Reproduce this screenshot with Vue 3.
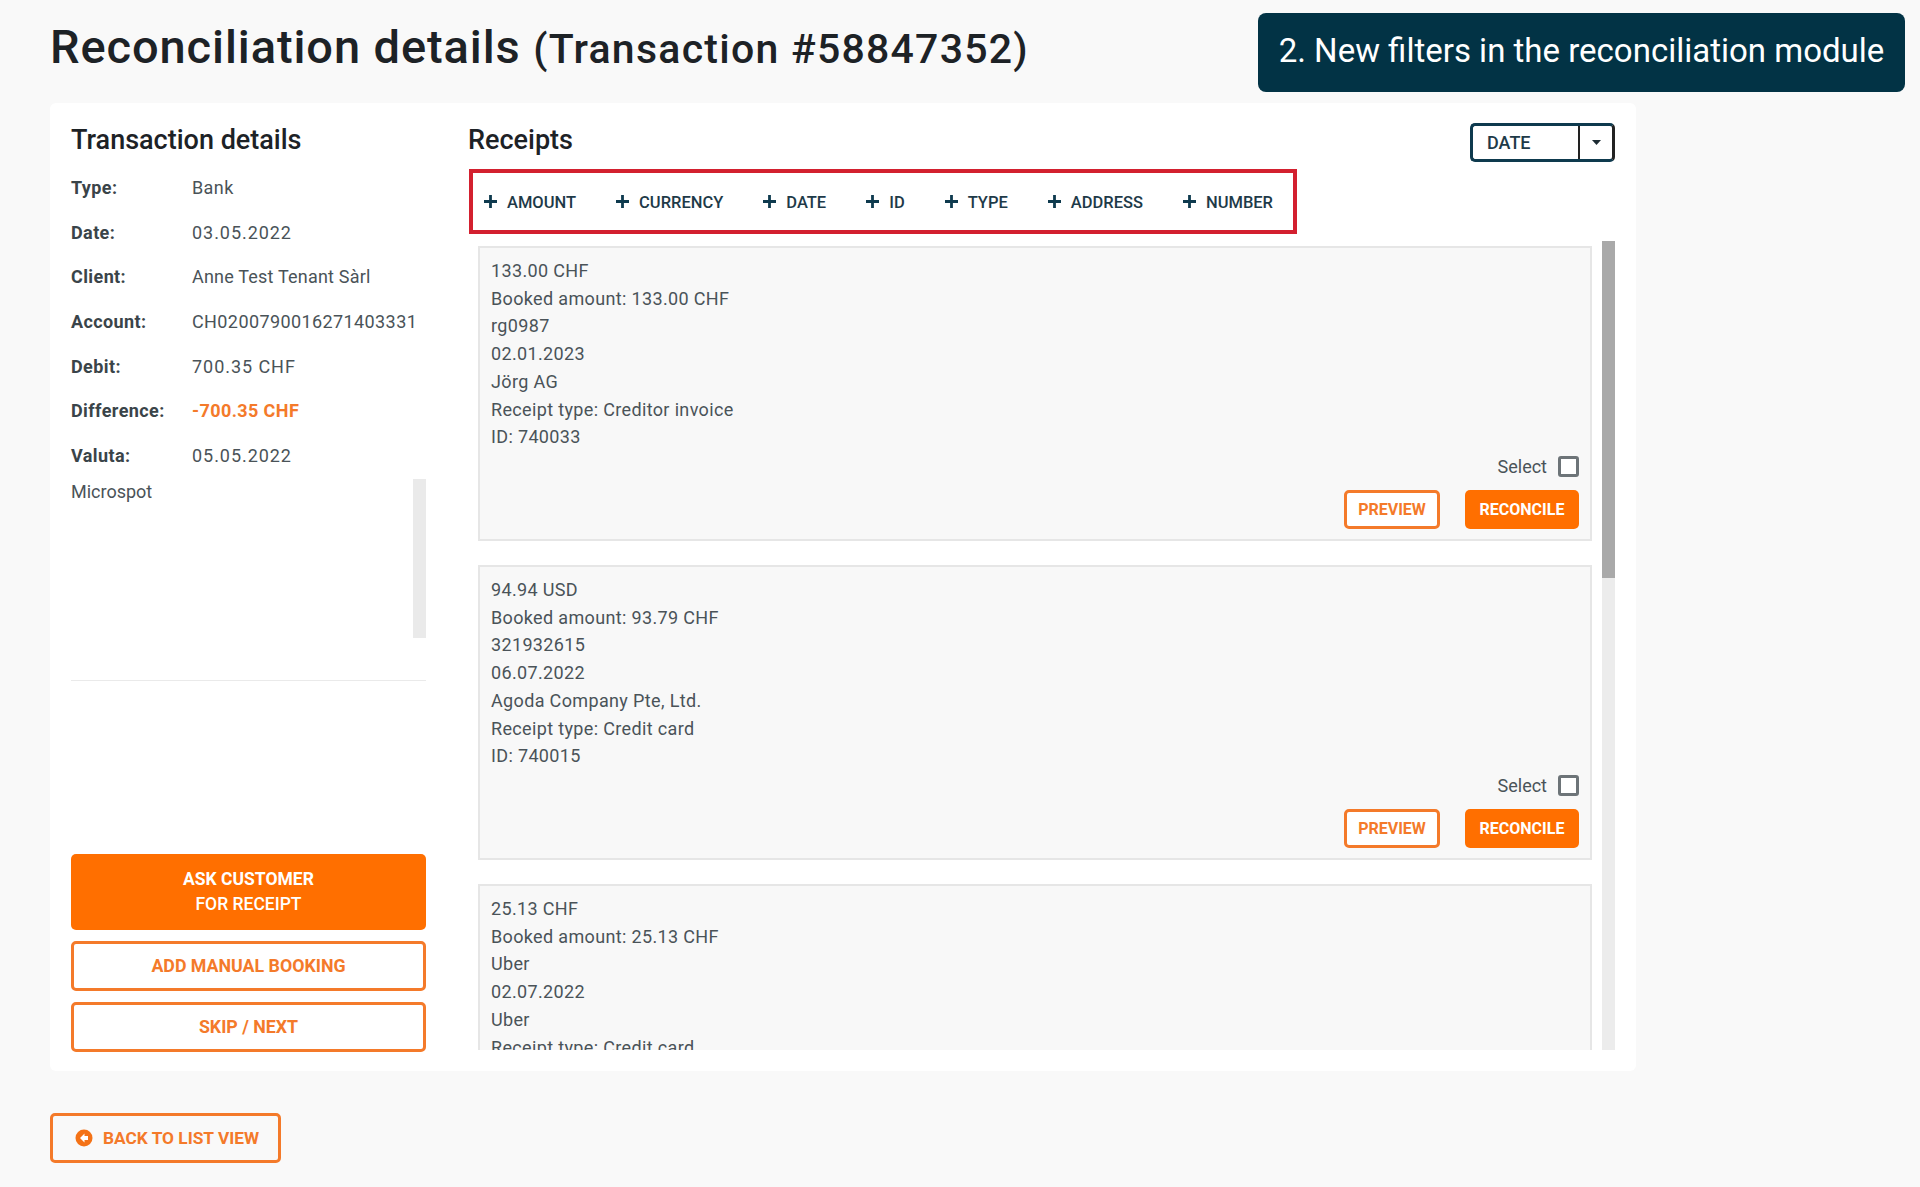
<script setup>
const details = [
  { label: 'Type:', value: 'Bank' },
  { label: 'Date:', value: '03.05.2022', num: true },
  { label: 'Client:', value: 'Anne Test Tenant Sàrl', tight: true },
  { label: 'Account:', value: 'CH0200790016271403331' },
  { label: 'Debit:', value: '700.35 CHF', num: true },
  { label: 'Difference:', value: '-700.35 CHF', alert: true },
  { label: 'Valuta:', value: '05.05.2022', num: true }
]
const filters = ['AMOUNT', 'CURRENCY', 'DATE', 'ID', 'TYPE', 'ADDRESS', 'NUMBER']
const receipts = [
  ['133.00 CHF', 'Booked amount: 133.00 CHF', 'rg0987', '02.01.2023', 'Jörg AG', 'Receipt type: Creditor invoice', 'ID: 740033'],
  ['94.94 USD', 'Booked amount: 93.79 CHF', '321932615', '06.07.2022', 'Agoda Company Pte, Ltd.', 'Receipt type: Credit card', 'ID: 740015'],
  ['25.13 CHF', 'Booked amount: 25.13 CHF', 'Uber', '02.07.2022', 'Uber', 'Receipt type: Credit card']
]
</script>

<template>
  <div class="page">
    <header class="top">
      <h1 class="title">Reconciliation details <small>(Transaction #58847352)</small></h1>
    </header>
    <div class="banner">2. New filters in the reconciliation module</div>

    <main class="panel">
      <aside class="left">
        <h2 class="heading">Transaction details</h2>
        <dl class="facts">
          <div v-for="d in details" :key="d.label" class="fact">
            <dt>{{ d.label }}</dt>
            <dd :class="{ alert: d.alert, num: d.num, tight: d.tight }">{{ d.value }}</dd>
          </div>
        </dl>
        <div class="note">
          <span>Microspot</span>
          <i class="note-bar"></i>
        </div>
        <div class="rule"></div>
        <div class="actions">
          <button class="btn solid ask"><b>ASK CUSTOMER</b><span>FOR RECEIPT</span></button>
          <button class="btn outline wide">ADD MANUAL BOOKING</button>
          <button class="btn outline wide">SKIP / NEXT</button>
        </div>
      </aside>

      <section class="right">
        <div class="right-head">
          <h2 class="heading">Receipts</h2>
          <div class="select">
            <span class="select-value">DATE</span>
            <span class="select-caret"><svg width="9" height="5" viewBox="0 0 9 5"><path d="M0 0h9L4.500 5z" fill="#1c2b33" /></svg></span>
          </div>
        </div>
        <div class="filters">
          <span v-for="f in filters" :key="f" class="filter">
            <svg width="15" height="15" viewBox="0 0 15 15"><path d="M7.500 1v13M1 7.500h13" stroke="#0e3a4e" stroke-width="2.800" fill="none" /></svg>
            <span class="filter-text">{{ f }}</span>
          </span>
        </div>
        <div class="list-wrap">
          <div class="list">
            <article v-for="r in receipts" :key="r[0]" class="card">
              <div v-for="(line, i) in r" :key="i" class="line">{{ line }}</div>
              <div class="pick">Select <i class="check"></i></div>
              <div class="card-btns">
                <button class="btn outline small">PREVIEW</button>
                <button class="btn solid small rec">RECONCILE</button>
              </div>
            </article>
          </div>
          <div class="track"><div class="thumb"></div></div>
        </div>
      </section>
    </main>

    <button class="btn outline back">
      <svg width="18" height="18" viewBox="0 0 18 18"><circle cx="9" cy="9" r="8.500" fill="#f47216" /><path d="M9.500 4.500 5 9l4.500 4.500V11H13V7H9.500z" fill="#fff" /></svg>
      BACK TO LIST VIEW
    </button>
  </div>
</template>

<style scoped>
.page {
  position: relative;
  height: 1187px;
  box-sizing: border-box;
  padding: 0 50px;
  background: #f9f9f9;
  font-family: Roboto, "Liberation Sans", sans-serif;
  color: #3f4a50;
  overflow: hidden;
}
.top {
  height: 103px;
  display: flex;
  align-items: center;
  padding-bottom: 10px;
  box-sizing: border-box;
}
.title {
  margin: 0;
  font-size: 47px;
  font-weight: 500;
  line-height: 1;
  letter-spacing: 0.9px;
  color: #1d2226;
  white-space: nowrap;
}
.title small {
  font-size: 41px;
  font-weight: 500;
  letter-spacing: 1.250px;
}
.banner {
  position: absolute;
  left: 1258px;
  top: 13px;
  width: 647px;
  height: 79px;
  box-sizing: border-box;
  display: flex;
  align-items: center;
  justify-content: center;
  padding-bottom: 4px;
  background: #023345;
  border-radius: 8px;
  color: #fff;
  font-size: 33px;
  font-weight: 400;
  white-space: nowrap;
}
.panel {
  width: 1586px;
  height: 968px;
  box-sizing: border-box;
  display: flex;
  gap: 42px;
  padding: 0 21px 0 21px;
  background: #fff;
  border-radius: 6px;
}
.left {
  width: 355px;
  flex: none;
  display: flex;
  flex-direction: column;
}
.heading {
  margin: 0;
  font-size: 27px;
  font-weight: 500;
  color: #1d2226;
  line-height: 32px;
}
.left > .heading {
  margin-top: 21px;
}
.facts {
  margin: 9px 0 0;
}
.fact {
  display: flex;
  height: 44.700px;
  align-items: center;
  font-size: 18px;
}
.fact dt {
  width: 121px;
  font-weight: 700;
  letter-spacing: 0.4px;
  color: #3a4449;
}
.fact dd {
  margin: 0;
  letter-spacing: 0.4px;
  color: #4a5358;
  white-space: nowrap;
}
.fact dd.num {
  letter-spacing: 0.95px;
}
.fact dd.tight {
  letter-spacing: 0.2px;
}
.fact dd.alert {
  color: #f47a2a;
  font-weight: 700;
}
.note {
  height: 159px;
  margin-top: 1px;
  display: flex;
  justify-content: space-between;
  font-size: 18px;
  color: #4a5358;
}
.note span {
  padding-top: 2px;
}
.note-bar {
  width: 13px;
  background: #eaeaea;
}
.rule {
  margin-top: 42px;
  height: 1px;
  background: #eaeaea;
}
.actions {
  margin-top: 173px;
  display: flex;
  flex-direction: column;
  gap: 11px;
}
.btn {
  box-sizing: border-box;
  font-family: inherit;
  font-weight: 700;
  border-radius: 5px;
  cursor: pointer;
}
.solid {
  background: #ff6f00;
  border: 0;
  color: #fff;
}
.outline {
  background: #fff;
  border: 3px solid #f47a2a;
  color: #f47a2a;
}
.ask {
  height: 76px;
  font-size: 17.500px;
  display: flex;
  flex-direction: column;
  align-items: center;
  justify-content: center;
  line-height: 25px;
}
.ask b {
  font-weight: 700;
}
.ask span {
  font-weight: 500;
}
.wide {
  height: 50px;
  font-size: 17.800px;
}
.right {
  flex: 1;
  min-width: 0;
  display: flex;
  flex-direction: column;
}
.right-head {
  display: flex;
  justify-content: space-between;
  align-items: flex-start;
  height: 66px;
  padding-top: 20px;
  box-sizing: border-box;
}
.right-head .heading {
  margin-top: 1px;
}
.select {
  display: flex;
  width: 145px;
  height: 39px;
  border: 3px solid #0e3a4e;
  border-right-color: #222;
  border-radius: 5px;
  box-sizing: border-box;
}
.select-value {
  flex: 1;
  display: flex;
  align-items: center;
  padding-left: 14px;
  font-size: 18px;
  font-weight: 500;
  color: #1e3a48;
}
.select-caret {
  width: 32px;
  border-left: 2px solid #222;
  display: flex;
  align-items: center;
  justify-content: center;
}
.filters {
  box-sizing: border-box;
  width: 828px;
  height: 65px;
  margin-left: 1px;
  border: 4px solid #d3202f;
  display: flex;
  align-items: center;
  gap: 39px;
  padding-left: 10px;
}
.filter {
  display: flex;
  align-items: center;
  gap: 9px;
  font-size: 16.500px;
  font-weight: 500;
  color: #1e3a48;
  white-space: nowrap;
}
.filter-text {
  padding-top: 2px;
}
.list-wrap {
  display: flex;
  height: 809px;
  margin-top: 7px;
  overflow: hidden;
  padding-left: 10px;
  gap: 10px;
}
.list {
  width: 1114px;
  flex: none;
  padding-top: 5px;
  display: flex;
  flex-direction: column;
  gap: 24px;
}
.card {
  box-sizing: border-box;
  height: 295px;
  flex: none;
  border: 2px solid #e6e6e6;
  background: #f8f8f8;
  padding: 9px 11px 10px;
  font-size: 18px;
  letter-spacing: 0.350px;
  color: #4a5358;
}
.line {
  line-height: 27.700px;
}
.pick {
  display: flex;
  justify-content: flex-end;
  align-items: center;
  gap: 11px;
  margin-top: 5px;
  font-size: 18px;
  letter-spacing: 0;
}
.check {
  width: 21px;
  height: 21px;
  box-sizing: border-box;
  border: 3px solid #6d7478;
  border-radius: 3px;
  background: #fff;
}
.card-btns {
  display: flex;
  justify-content: flex-end;
  gap: 25px;
  margin-top: 13px;
  letter-spacing: 0;
}
.small {
  height: 39px;
  font-size: 16px;
}
.card-btns .outline {
  width: 96px;
}
.rec {
  width: 114px;
}
.track {
  width: 13px;
  flex: none;
  background: #ececec;
}
.thumb {
  height: 337px;
  background: #a9a9a9;
}
.back {
  margin-top: 42px;
  width: 231px;
  height: 50px;
  padding: 0 0 0 22px;
  display: flex;
  align-items: center;
  justify-content: flex-start;
  gap: 10px;
  font-size: 17.300px;
  background: transparent;
}
</style>
